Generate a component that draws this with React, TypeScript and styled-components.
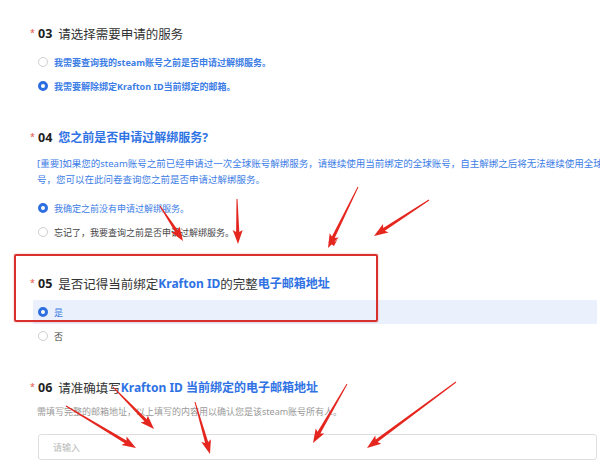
import React from "react";
import styled, { createGlobalStyle } from "styled-components";

const Global = createGlobalStyle`
  html, body { margin: 0; padding: 0; background: #fff; }
  body { width: 600px; height: 465px; overflow: hidden; font-family: "Noto Sans", "Noto Sans CJK SC", sans-serif; }
`;

const Page = styled.div`
  position: relative;
  width: 600px;
  height: 465px;
  box-sizing: border-box;
  padding: 23px 3px 0 30px;
  display: flex;
  flex-direction: column;
  gap: 29px;
  overflow: hidden;
`;

const Question = styled.section`
  display: flex;
  flex-direction: column;
`;

const Heading = styled.div`
  height: 20px;
  display: flex;
  align-items: center;
  font-size: 12.5px;
  color: #333;
  white-space: nowrap;
`;

const Star = styled.span`
  color: #e8524a;
  font-size: 9px;
  width: 8px;
  align-self: flex-start;
  margin-top: 3px;
`;

const Num = styled.b`
  color: #1f1f1f;
  font-weight: 700;
  margin-right: 6px;
`;

const Blue = styled.span`
  color: #2f72e4;
  font-weight: 700;
  font-size: 12px;
`;

const Options = styled.div<{ $top: number }>`
  margin-top: ${(p) => p.$top}px;
  margin-left: 3px;
  display: flex;
  flex-direction: column;
`;

const Row = styled.div<{ $active?: boolean }>`
  height: 24px;
  display: flex;
  align-items: center;
  gap: 6px;
  padding-left: 5px;
  background: ${(p) => (p.$active ? "#eaf1fd" : "transparent")};
`;

const Radio = styled.span<{ $checked?: boolean }>`
  width: 10px;
  height: 10px;
  box-sizing: border-box;
  border-radius: 50%;
  flex: none;
  background: #fff;
  border: ${(p) => (p.$checked ? "3px solid #2d6fe0" : "1px solid #cfcfcf")};
`;

const OptText = styled.span<{ $blue?: boolean; $bold?: boolean }>`
  font-size: 9px;
  color: ${(p) => (p.$blue ? "#3c7de6" : "#444")};
  font-weight: ${(p) => (p.$bold ? 700 : 400)};
  white-space: nowrap;
`;

const Notice = styled.div`
  margin-top: 9px;
  margin-left: 7px;
  font-size: 9.5px;
  line-height: 16px;
  color: #3c7de6;
  white-space: nowrap;
`;

const Helper = styled.div`
  margin-top: 7px;
  margin-left: 7px;
  font-size: 9px;
  line-height: 16px;
  color: #9a9a9a;
  white-space: nowrap;
`;

const Input = styled.div`
  margin-top: 14px;
  margin-left: 8px;
  height: 26px;
  box-sizing: border-box;
  border: 1px solid #dedede;
  border-radius: 3px;
  display: flex;
  align-items: center;
  padding-left: 14px;
  font-size: 9px;
  color: #b8b8b8;
`;

const RedBox = styled.div`
  position: absolute;
  left: 14px;
  top: 254px;
  width: 364px;
  height: 68px;
  box-sizing: border-box;
  border: 2px solid #d8312d;
  border-radius: 2px;
  box-shadow: 0 0 2px rgba(200, 40, 40, 0.4);
  pointer-events: none;
`;

const Overlay = styled.svg`
  position: absolute;
  left: 0;
  top: 0;
  width: 600px;
  height: 465px;
  pointer-events: none;
`;

type Arrow = [number, number, number, number];

const arrows: Arrow[] = [
  [160, 206, 183, 241],
  [237, 199, 238, 244],
  [358, 187, 328, 248],
  [429, 200, 374, 236],
  [332, 238, 334, 246],
  [113, 387, 154, 429],
  [66, 406, 136, 448],
  [195, 402, 210, 454],
  [347, 384, 313, 443],
  [456, 382, 367, 448],
];

function arrowPoints([x1, y1, x2, y2]: Arrow): string {
  const dx = x2 - x1;
  const dy = y2 - y1;
  const L = Math.hypot(dx, dy);
  const ux = dx / L;
  const uy = dy / L;
  const px = -uy;
  const py = ux;
  const headLen = Math.min(12, L * 0.45);
  const headW = 5;
  const neckW = 1.6;
  const tailW = 0.5;
  const bx = x2 - ux * headLen;
  const by = y2 - uy * headLen;
  const sx = bx - ux * 2;
  const sy = by - uy * 2;
  const pts = [
    [x1 + px * tailW, y1 + py * tailW],
    [bx + px * neckW, by + py * neckW],
    [sx + px * headW, sy + py * headW],
    [x2, y2],
    [sx - px * headW, sy - py * headW],
    [bx - px * neckW, by - py * neckW],
    [x1 - px * tailW, y1 - py * tailW],
  ];
  return pts.map((p) => `${p[0].toFixed(1)},${p[1].toFixed(1)}`).join(" ");
}

export default function App() {
  return (
    <>
      <Global />
      <Page>
        <Question>
          <Heading>
            <Star>*</Star>
            <Num>03</Num>请选择需要申请的服务
          </Heading>
          <Options $top={7}>
            <Row>
              <Radio />
              <OptText $blue $bold>我需要查询我的steam账号之前是否申请过解绑服务。</OptText>
            </Row>
            <Row>
              <Radio $checked />
              <OptText $blue $bold>我需要解除绑定Krafton ID当前绑定的邮箱。</OptText>
            </Row>
          </Options>
        </Question>

        <Question>
          <Heading>
            <Star>*</Star>
            <Num>04</Num>
            <Blue>您之前是否申请过解绑服务?</Blue>
          </Heading>
          <Notice>
            [重要]如果您的steam账号之前已经申请过一次全球账号解绑服务，请继续使用当前绑定的全球账号，自主解绑之后将无法继续使用全球账
            <br />
            号，您可以在此问卷查询您之前是否申请过解绑服务。
          </Notice>
          <Options $top={8}>
            <Row>
              <Radio $checked />
              <OptText $blue>我确定之前没有申请过解绑服务。</OptText>
            </Row>
            <Row>
              <Radio />
              <OptText>忘记了，我要查询之前是否申请过解绑服务。</OptText>
            </Row>
          </Options>
        </Question>

        <Question>
          <Heading>
            <Star>*</Star>
            <Num>05</Num>是否记得当前绑定<Blue>Krafton ID</Blue>的完整<Blue>电子邮箱地址</Blue>
          </Heading>
          <Options $top={7}>
            <Row $active>
              <Radio $checked />
              <OptText $blue>是</OptText>
            </Row>
            <Row>
              <Radio />
              <OptText>否</OptText>
            </Row>
          </Options>
        </Question>

        <Question>
          <Heading>
            <Star>*</Star>
            <Num>06</Num>请准确填写<Blue>Krafton ID 当前绑定的电子邮箱地址</Blue>
          </Heading>
          <Helper>需填写完整的邮箱地址，以上填写的内容用以确认您是该steam账号所有人。</Helper>
          <Input>请输入</Input>
        </Question>

        <RedBox />
        <Overlay viewBox="0 0 600 465">
          {arrows.map((a, i) => (
            <polygon key={i} points={arrowPoints(a)} fill="#e5261f" />
          ))}
        </Overlay>
      </Page>
    </>
  );
}
